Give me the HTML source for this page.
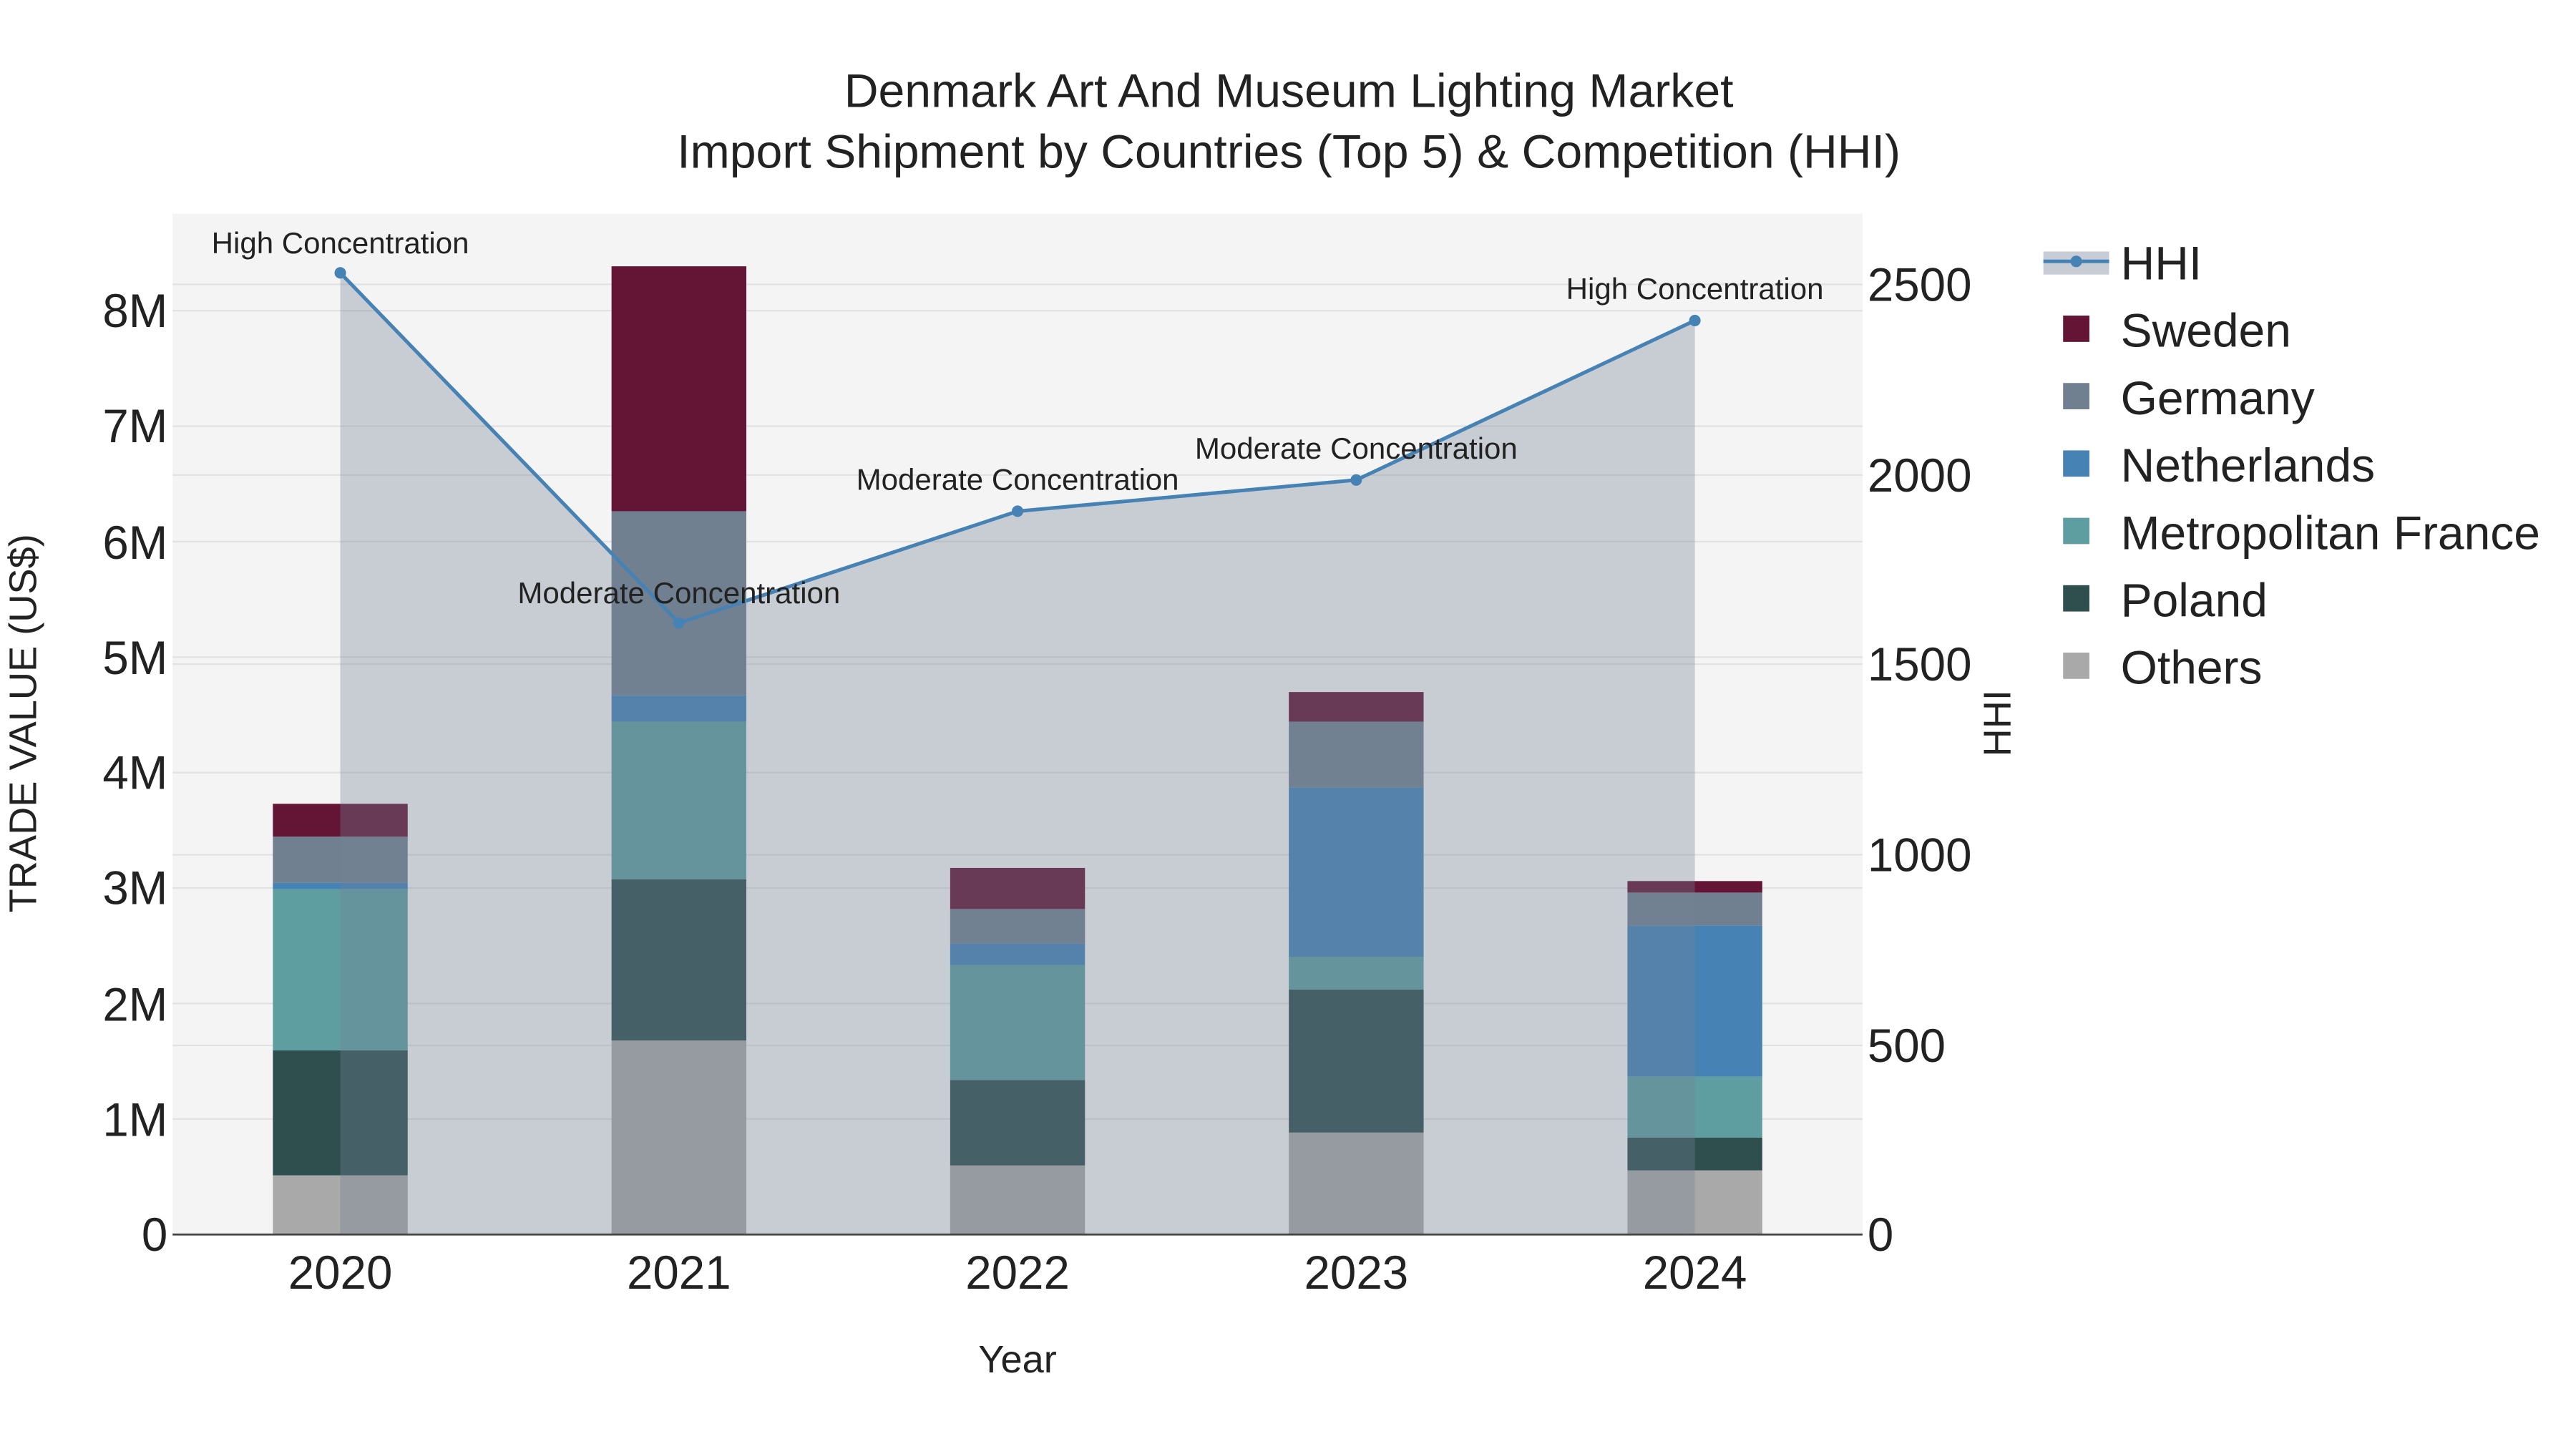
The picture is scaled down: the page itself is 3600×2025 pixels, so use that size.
<!DOCTYPE html>
<html><head><meta charset="utf-8"><style>
html,body{margin:0;padding:0;background:#fff;}
svg{display:block;}
text{font-family:"Liberation Sans",sans-serif;fill:#222;}
</style></head><body>
<svg width="3600" height="2025" viewBox="0 0 1567 881.5" preserveAspectRatio="none" xmlns="http://www.w3.org/2000/svg">
<rect width="1567" height="882" fill="#fff"/>
<rect x="105" y="130" width="1028" height="621" fill="#f4f4f4"/>
<g stroke="#e2e2e2" stroke-width="1">
<line x1="105" x2="1133" y1="680.75" y2="680.75"/><line x1="105" x2="1133" y1="610.5" y2="610.5"/>
<line x1="105" x2="1133" y1="540.25" y2="540.25"/><line x1="105" x2="1133" y1="470" y2="470"/>
<line x1="105" x2="1133" y1="399.75" y2="399.75"/><line x1="105" x2="1133" y1="329.5" y2="329.5"/>
<line x1="105" x2="1133" y1="259.25" y2="259.25"/><line x1="105" x2="1133" y1="189" y2="189"/>
<line x1="105" x2="1133" y1="636" y2="636"/><line x1="105" x2="1133" y1="520" y2="520"/>
<line x1="105" x2="1133" y1="404" y2="404"/><line x1="105" x2="1133" y1="289" y2="289"/>
<line x1="105" x2="1133" y1="173" y2="173"/>
</g>
<g>
<rect x="166" width="82" y="715" height="36" fill="#a9a9a9"/>
<rect x="166" width="82" y="639" height="76" fill="#2f4f4f"/>
<rect x="166" width="82" y="541" height="98" fill="#5f9ea0"/>
<rect x="166" width="82" y="537" height="4" fill="#4682b4"/>
<rect x="166" width="82" y="509" height="28" fill="#708090"/>
<rect x="166" width="82" y="489" height="20" fill="#641535"/>

<rect x="372" width="82" y="633" height="118" fill="#a9a9a9"/>
<rect x="372" width="82" y="535" height="98" fill="#2f4f4f"/>
<rect x="372" width="82" y="439" height="96" fill="#5f9ea0"/>
<rect x="372" width="82" y="423" height="16" fill="#4682b4"/>
<rect x="372" width="82" y="311" height="112" fill="#708090"/>
<rect x="372" width="82" y="162" height="149" fill="#641535"/>

<rect x="578" width="82" y="709" height="42" fill="#a9a9a9"/>
<rect x="578" width="82" y="657" height="52" fill="#2f4f4f"/>
<rect x="578" width="82" y="587" height="70" fill="#5f9ea0"/>
<rect x="578" width="82" y="574" height="13" fill="#4682b4"/>
<rect x="578" width="82" y="553" height="21" fill="#708090"/>
<rect x="578" width="82" y="528" height="25" fill="#641535"/>

<rect x="784" width="82" y="689" height="62" fill="#a9a9a9"/>
<rect x="784" width="82" y="602" height="87" fill="#2f4f4f"/>
<rect x="784" width="82" y="582" height="20" fill="#5f9ea0"/>
<rect x="784" width="82" y="479" height="103" fill="#4682b4"/>
<rect x="784" width="82" y="439" height="40" fill="#708090"/>
<rect x="784" width="82" y="421" height="18" fill="#641535"/>

<rect x="990" width="82" y="712" height="39" fill="#a9a9a9"/>
<rect x="990" width="82" y="692" height="20" fill="#2f4f4f"/>
<rect x="990" width="82" y="655" height="37" fill="#5f9ea0"/>
<rect x="990" width="82" y="563" height="92" fill="#4682b4"/>
<rect x="990" width="82" y="543" height="20" fill="#708090"/>
<rect x="990" width="82" y="536" height="7" fill="#641535"/>
</g>
<polygon points="207,751 207,166 413,379 619,311 825,292 1031,195 1031,751" fill="rgb(117,129,152)" fill-opacity="0.347"/>
<polyline points="207,166 413,379 619,311 825,292 1031,195" fill="none" stroke="#4682b4" stroke-width="2.2"/>
<g fill="#4682b4"><circle cx="207" cy="166" r="3.5"/><circle cx="413" cy="379" r="3.5"/><circle cx="619" cy="311" r="3.5"/><circle cx="825" cy="292" r="3.5"/><circle cx="1031" cy="195" r="3.5"/></g>
<line x1="105" x2="1133" y1="751" y2="751" stroke="#444" stroke-width="1.2"/>
<g font-size="18.3" text-anchor="middle">
<text x="207" y="154">High Concentration</text>
<text x="413" y="367">Moderate Concentration</text>
<text x="619" y="298">Moderate Concentration</text>
<text x="825" y="279">Moderate Concentration</text>
<text x="1031" y="182">High Concentration</text>
</g>
<g font-size="28.5" text-anchor="end">
<text x="102" y="761">0</text><text x="102" y="691">1M</text><text x="102" y="621">2M</text>
<text x="102" y="550">3M</text><text x="102" y="480">4M</text><text x="102" y="410">5M</text>
<text x="102" y="340">6M</text><text x="102" y="269">7M</text><text x="102" y="199">8M</text>
</g>
<g font-size="28.5">
<text x="1136" y="761">0</text><text x="1136" y="646">500</text><text x="1136" y="530">1000</text>
<text x="1136" y="414">1500</text><text x="1136" y="299">2000</text><text x="1136" y="183">2500</text>
</g>
<g font-size="28.5" text-anchor="middle">
<text x="207" y="784">2020</text><text x="413" y="784">2021</text><text x="619" y="784">2022</text>
<text x="825" y="784">2023</text><text x="1031" y="784">2024</text>
</g>
<text x="619" y="835" font-size="23.6" text-anchor="middle">Year</text>
<text transform="translate(22,440) rotate(-90)" font-size="23.6" text-anchor="middle">TRADE VALUE (US$)</text>
<text transform="translate(1223,440) rotate(-90)" font-size="23.6" text-anchor="middle">HHI</text>
<text x="784" y="65" font-size="28.8" text-anchor="middle">Denmark Art And Museum Lighting Market</text>
<text x="784" y="102" font-size="28.8" text-anchor="middle">Import Shipment by Countries (Top 5) &amp; Competition (HHI)</text>
<rect x="1243" y="153" width="40" height="14" fill="#c8ccd4"/>
<line x1="1243" x2="1283" y1="159" y2="159" stroke="#4682b4" stroke-width="2.2"/>
<circle cx="1263" cy="159" r="3.5" fill="#4682b4"/>
<rect x="1255" y="192" width="16" height="16" fill="#641535"/>
<rect x="1255" y="233" width="16" height="16" fill="#708090"/>
<rect x="1255" y="274" width="16" height="16" fill="#4682b4"/>
<rect x="1255" y="315" width="16" height="16" fill="#5f9ea0"/>
<rect x="1255" y="356" width="16" height="16" fill="#2f4f4f"/>
<rect x="1255" y="397" width="16" height="16" fill="#a9a9a9"/>
<g font-size="28.7">
<text x="1290" y="170">HHI</text><text x="1290" y="211">Sweden</text><text x="1290" y="252">Germany</text>
<text x="1290" y="293">Netherlands</text><text x="1290" y="334">Metropolitan France</text>
<text x="1290" y="375">Poland</text><text x="1290" y="416">Others</text>
</g>
</svg>
</body></html>
